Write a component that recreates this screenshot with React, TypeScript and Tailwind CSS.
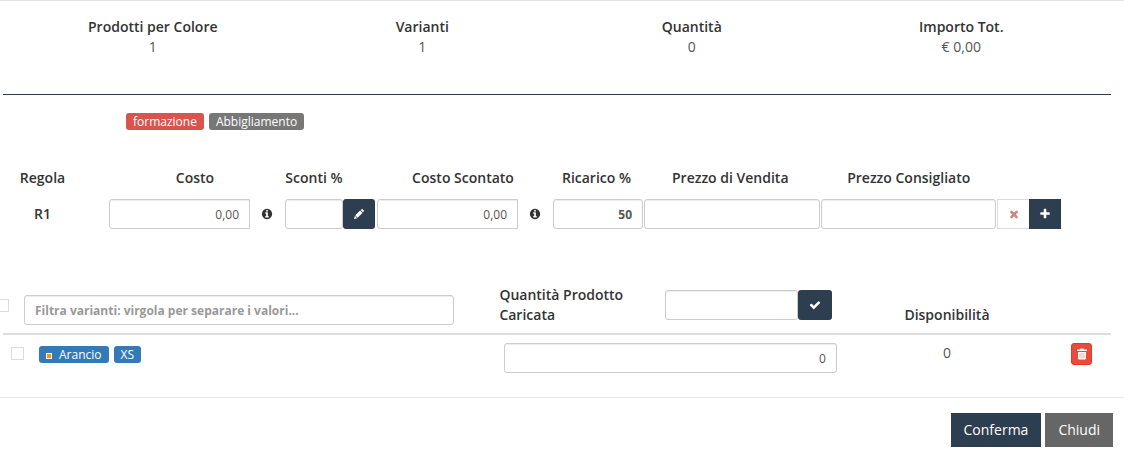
import type { ReactNode } from "react";

function Icon({ d, size }: { d: string; size: string }) {
  return (
    <svg viewBox="0 0 1792 1792" className={"fill-current " + size} aria-hidden="true">
      <path d={d} />
    </svg>
  );
}

function TrashIcon() {
  return (
    <svg viewBox="0 0 12 12" className="size-3" aria-hidden="true">
      <path fill="currentColor" d="M4 1.5Q4 .5 5 .5h2q1 0 1 1h2.5q.5 0 .5.5v1H1V2q0-.5.5-.5zM2 4h8v6.500q0 1-1 1H3q-1 0-1-1z" />
      <path stroke="#e74c3c" strokeOpacity="0.55" strokeWidth="0.8" d="M4.100 5v5.500M6 5v5.500M7.900 5v5.500" />
    </svg>
  );
}

const INFO =
  "M1152 1376v-160q0-14-9-23t-23-9h-96v-512q0-14-9-23t-23-9h-320q-14 0-23 9t-9 23v160q0 14 9 23t23 9h96v320h-96q-14 0-23 9t-9 23v160q0 14 9 23t23 9h448q14 0 23-9t9-23zm-128-896v-160q0-14-9-23t-23-9h-192q-14 0-23 9t-9 23v160q0 14 9 23t23 9h192q14 0 23-9t9-23zm640 416q0 209-103 385.5t-279.5 279.5-385.5 103-385.5-103-279.5-279.5-103-385.5 103-385.5 279.5-279.5 385.5-103 385.5 103 279.5 279.5 103 385.5z";
const PENCIL =
  "M1060 380l352 352-720 720-352-352zM280 1170l342 342-462 120zM1643 432q0 43-32 75l-130 130-326-326 130-130q32-32 75-32t75 32l176 176q32 32 32 75z";
const TIMES =
  "M1490 1322q0 40-28 68l-136 136q-28 28-68 28t-68-28l-294-294-294 294q-28 28-68 28t-68-28l-136-136q-28-28-28-68t28-68l294-294-294-294q-28-28-28-68t28-68l136-136q28-28 68-28t68 28l294 294 294-294q28-28 68-28t68 28l136 136q28 28 28 68t-28 68l-294 294 294 294q28 28 28 68z";
const PLUS =
  "M1600 736v192q0 40-28 68t-68 28h-416v416q0 40-28 68t-68 28h-192q-40 0-68-28t-28-68v-416h-416q-40 0-68-28t-28-68v-192q0-40 28-68t68-28h416v-416q0-40 28-68t68-28h192q40 0 68 28t28 68v416h416q40 0 68 28t28 68z";
const CHECK =
  "M1671 566q0 40-28 68l-724 724-136 136q-28 28-68 28t-68-28l-136-136-362-362q-28-28-28-68t28-68l136-136q28-28 68-28t68 28l294 295 656-657q28-28 68-28t68 28l136 136q28 28 28 68z";

const field =
  "block h-[30px] w-full min-w-0 border border-[#ccc] bg-white px-2.5 text-right text-xs text-[#555] shadow-[inset_0_1px_1px_rgba(0,0,0,0.075)] outline-none";
const navy = "flex h-[30px] shrink-0 items-center justify-center bg-[#2c3e50] text-white";
const tick = "block size-[13px] shrink-0 appearance-none border border-[#dcdcdc] bg-white checked:bg-[#337ab7]";

function Tag({ color, children }: { color: string; children: ReactNode }) {
  return (
    <span className={"inline-flex items-center rounded-[3px] px-[7px] text-xs/[17px] text-white " + color}>
      {children}
    </span>
  );
}

const totals = [
  ["Prodotti per Colore", "1"],
  ["Varianti", "1"],
  ["Quantità", "0"],
  ["Importo Tot.", "€ 0,00"],
];

export default function App() {
  return (
    <div className="border-t border-[#e5e5e5] bg-white font-['Open_Sans',sans-serif] text-sm/5 text-[#333]">
      <div className="pr-[13px] pl-[3px]">
        <dl className="mx-[15px] grid grid-cols-4 pt-4 text-center">
          {totals.map(([name, value]) => (
            <div key={name}>
              <dt className="font-semibold">{name}</dt>
              <dd className="text-[#555]">{value}</dd>
            </div>
          ))}
        </dl>
        <hr className="mt-[37px] border-t border-[#2c3e50]" />

        <div className="mt-[18px] ml-[123px] flex gap-[5px]">
          <Tag color="bg-[#d9534f]">formazione</Tag>
          <Tag color="bg-[#777]">Abbigliamento</Tag>
        </div>

        <div className="mt-[38px] pr-[50px] pl-px">
          <table className="w-full table-fixed">
            <colgroup>
              <col className="w-[105px]" />
              <col className="w-[176px]" />
              <col className="w-[92px]" />
              <col className="w-[176px]" />
              <col className="w-[91px]" />
              <col />
              <col />
              <col className="w-16" />
            </colgroup>
            <thead>
              <tr className="h-5 whitespace-nowrap">
                <th className="pr-7 font-semibold">Regola</th>
                <th className="pr-1 font-semibold">Costo</th>
                <th className="pr-[34px] font-semibold">Sconti %</th>
                <th className="pr-1 font-semibold">Costo Scontato</th>
                <th className="pr-1 font-semibold">Ricarico %</th>
                <th className="pr-1 font-semibold">Prezzo di Vendita</th>
                <th className="font-semibold">Prezzo Consigliato</th>
                <td />
              </tr>
            </thead>
            <tbody>
              <tr>
                <th className="pt-[11px] pr-7 font-semibold">R1</th>
                <td className="pt-[11px] pr-[2px]">
                  <div className="flex items-center">
                    <input aria-label="Costo" defaultValue="0,00" className={field + " rounded-l-[3px]"} />
                    <span className="flex w-[33px] shrink-0 justify-center">
                      <Icon d={INFO} size="size-3" />
                    </span>
                  </div>
                </td>
                <td className="pt-[11px] pr-[2px]">
                  <div className="flex">
                    <input aria-label="Sconti %" className={field + " rounded-[3px]"} />
                    <button type="button" aria-label="Modifica sconti" className={navy + " w-8 rounded-[3px]"}>
                      <Icon d={PENCIL} size="size-3" />
                    </button>
                  </div>
                </td>
                <td className="pt-[11px] pr-[2px]">
                  <div className="flex items-center">
                    <input aria-label="Costo Scontato" defaultValue="0,00" className={field + " rounded-l-[3px]"} />
                    <span className="flex w-[33px] shrink-0 justify-center">
                      <Icon d={INFO} size="size-3" />
                    </span>
                  </div>
                </td>
                <td className="pt-[11px] pr-px">
                  <input aria-label="Ricarico %" defaultValue="50" className={field + " rounded-[3px] font-bold"} />
                </td>
                <td className="pt-[11px] pr-px">
                  <input aria-label="Prezzo di Vendita" className={field + " rounded-[3px]"} />
                </td>
                <td className="pt-[11px] pr-px">
                  <input aria-label="Prezzo Consigliato" className={field + " rounded-[3px]"} />
                </td>
                <td className="pt-[11px]">
                  <div className="flex">
                    <button
                      type="button"
                      aria-label="Rimuovi regola"
                      className="flex h-[30px] w-8 items-center justify-center border border-r-0 border-[#ddd] text-[#cf8583]"
                    >
                      <Icon d={TIMES} size="size-3" />
                    </button>
                    <button type="button" aria-label="Aggiungi regola" className={navy + " w-8"}>
                      <Icon d={PLUS} size="size-3" />
                    </button>
                  </div>
                </td>
              </tr>
            </tbody>
          </table>
        </div>

        <table className="mt-14 w-full table-fixed">
          <colgroup>
            <col className="w-[44.8%]" />
            <col className="w-[32%]" />
            <col />
            <col className="w-[71px]" />
          </colgroup>
          <thead>
            <tr className="border-b-2 border-[#ddd]">
              <th className="py-2 align-bottom">
                <div className="-ml-[7px] flex pr-[45px]">
                  <input type="checkbox" aria-label="Seleziona tutte le varianti" className={tick + " mt-1"} />
                  <input
                    aria-label="Filtra varianti"
                    placeholder="Filtra varianti: virgola per separare i valori..."
                    className="ml-[15px] h-[30px] w-full rounded-[3px] border border-[#ccc] px-2.5 text-left text-xs font-bold shadow-[inset_0_1px_1px_rgba(0,0,0,0.075)] outline-none placeholder:text-[#999]"
                  />
                </div>
              </th>
              <th className="pb-2 align-bottom">
                <div className="flex pr-[22px]">
                  <label htmlFor="loaded" className="w-[166px] shrink-0 pr-6 text-left font-semibold">
                    Quantità Prodotto Caricata
                  </label>
                  <input id="loaded" className={field + " mt-[5px] rounded-[3px]"} />
                  <button type="button" aria-label="Applica quantità" className={navy + " mt-[5px] w-[34px] rounded-[3px]"}>
                    <Icon d={CHECK} size="size-3" />
                  </button>
                </div>
              </th>
              <th className="pb-2 align-bottom font-semibold">Disponibilità</th>
              <td />
            </tr>
          </thead>
          <tbody>
            <tr className="align-top">
              <td className="pt-[11px]">
                <div className="flex pl-2">
                  <input type="checkbox" aria-label="Seleziona variante" className={tick + " mt-px"} />
                  <div className="ml-[15px] flex gap-[5px]">
                    <Tag color="bg-[#337ab7]">
                      <span className="mt-0.5 mr-[7px] size-1.5 border border-white bg-[#ff9800]" />
                      Arancio
                    </Tag>
                    <Tag color="bg-[#337ab7]">XS</Tag>
                  </div>
                </div>
              </td>
              <td className="pt-2 pr-[17px] pl-[5px]">
                <input aria-label="Quantità" defaultValue="0" className={field + " rounded-[3px]"} />
              </td>
              <td className="pt-2 text-center text-[#555]">0</td>
              <td className="pt-2 pl-[31px]">
                <button
                  type="button"
                  aria-label="Elimina variante"
                  className="flex h-[22px] w-[21px] items-center justify-center rounded-[3px] border border-[#e43725] bg-[#e74c3c] text-white"
                >
                  <TrashIcon />
                </button>
              </td>
            </tr>
          </tbody>
        </table>
      </div>

      <footer className="mt-6 flex justify-end gap-1 border-t border-[#e5e5e5] py-[15px] pr-[11px]">
        <button type="button" className="h-[34px] bg-[#2c3e50] px-[13px] text-white">Conferma</button>
        <button type="button" className="h-[34px] bg-[#666] px-[13px] text-white">Chiudi</button>
      </footer>
    </div>
  );
}
